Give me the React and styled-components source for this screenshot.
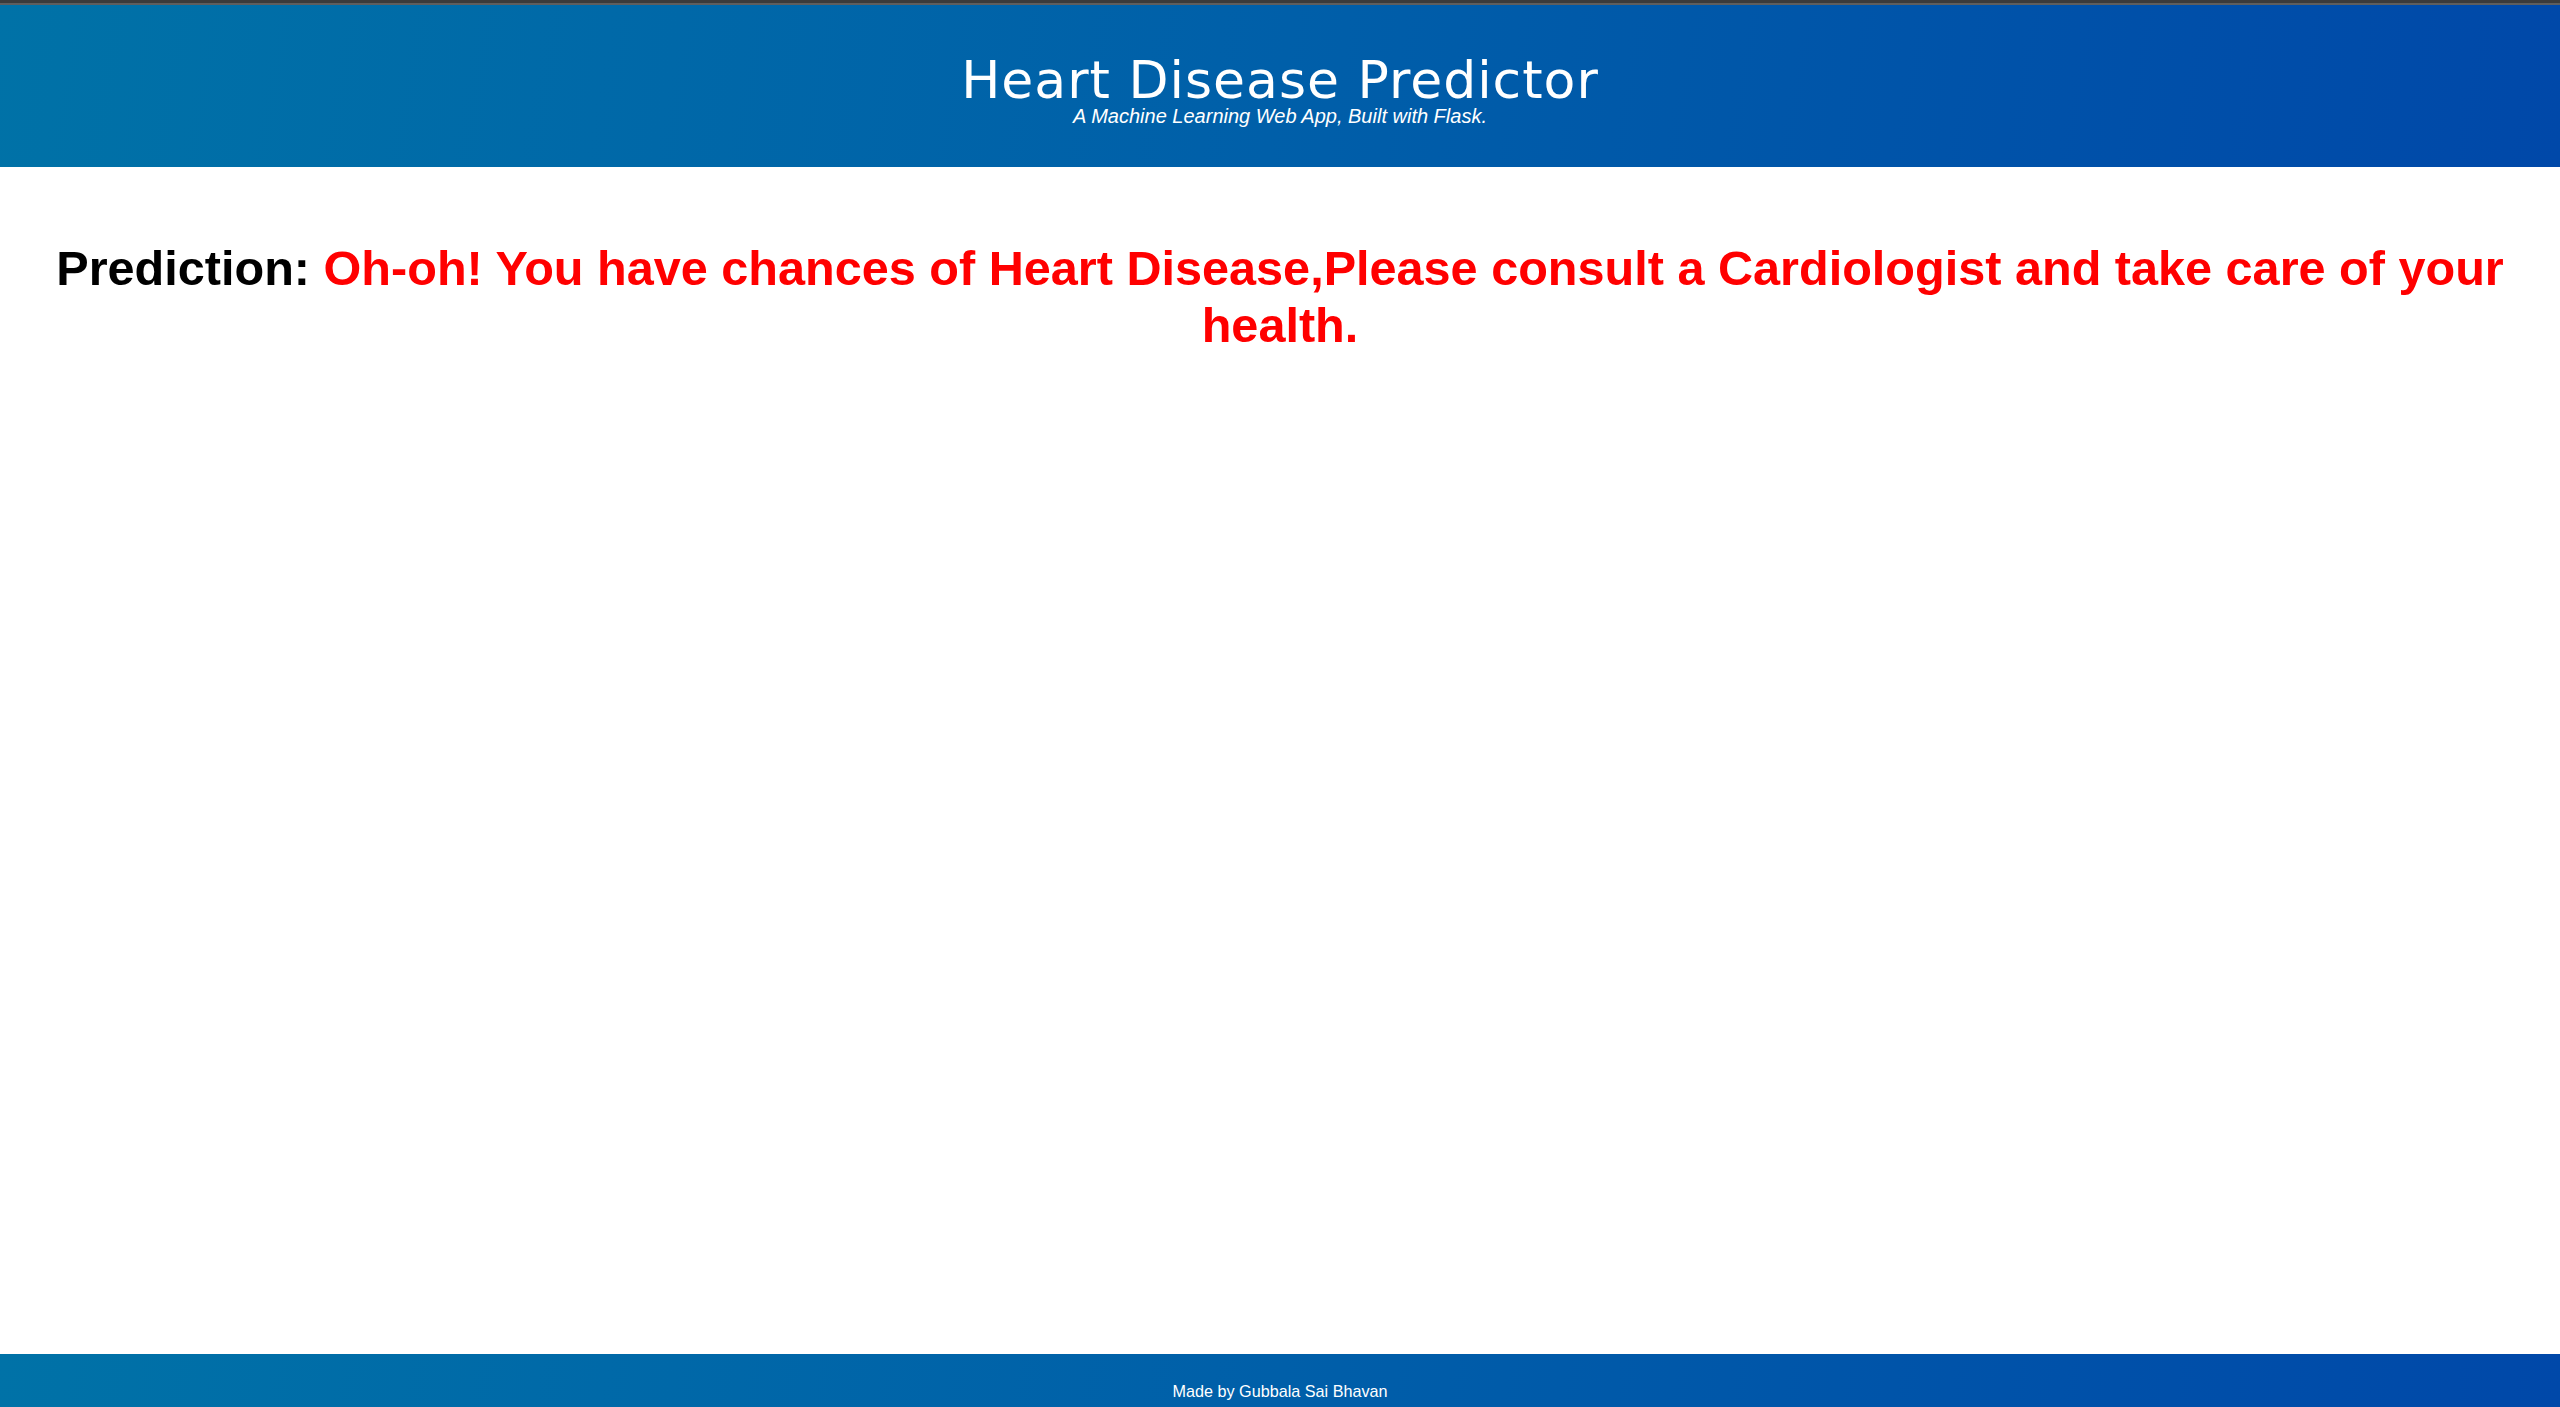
import styled, { createGlobalStyle } from "styled-components";

const GlobalStyle = createGlobalStyle`
    html, body {
        margin: 0;
        padding: 0;
        background: #ffffff;
        font-family: "Liberation Sans", Arial, sans-serif;
    }
`;

const Page = styled.div`
    min-height: 100vh;
    display: flex;
    flex-direction: column;
`;

const Header = styled.header`
    border-top: 3px solid #3b3b3b;
    box-shadow: inset 0 2px 0 #5e5e5e;
    background: linear-gradient(100deg, #0072a7 0%, #005fa9 50%, #0048a9 100%);
    color: #ffffff;
    text-align: center;
    padding: 51px 0 41px;
    display: flex;
    flex-direction: column;
    align-items: center;
`;

const Title = styled.h1`
    margin: 0;
    font-family: "DejaVu Sans", Verdana, sans-serif;
    font-weight: normal;
    font-size: 52px;
    line-height: 52px;
    letter-spacing: 1px;
`;

const Tagline = styled.p`
    margin: 0;
    font-style: italic;
    font-size: 20px;
    line-height: 20px;
`;

const Main = styled.main`
    flex: 1;
    padding: 73px 40px 0;
    text-align: center;
`;

const Prediction = styled.h2`
    margin: 0;
    font-size: 48.6px;
    line-height: 57px;
    font-weight: bold;
    color: #000000;
`;

const Verdict = styled.span`
    color: ${(props) => (props.bad ? "#ff0000" : "#008000")};
`;

const Footer = styled.footer`
    height: 53px;
    box-sizing: border-box;
    padding-top: 28px;
    background: linear-gradient(100deg, #0072a7 0%, #005fa9 50%, #0048a9 100%);
    color: #ffffff;
    text-align: center;
    font-size: 16.2px;
`;

const App = () => {
    return (
        <Page>
            <GlobalStyle />
            <Header>
                <Title>Heart Disease Predictor</Title>
                <Tagline>A Machine Learning Web App, Built with Flask.</Tagline>
            </Header>
            <Main>
                <Prediction>
                    Prediction:{" "}
                    <Verdict bad>
                        Oh-oh! You have chances of Heart Disease,Please consult a Cardiologist and take care of your health.
                    </Verdict>
                </Prediction>
            </Main>
            <Footer>Made by Gubbala Sai Bhavan</Footer>
        </Page>
    );
};

export default App;
